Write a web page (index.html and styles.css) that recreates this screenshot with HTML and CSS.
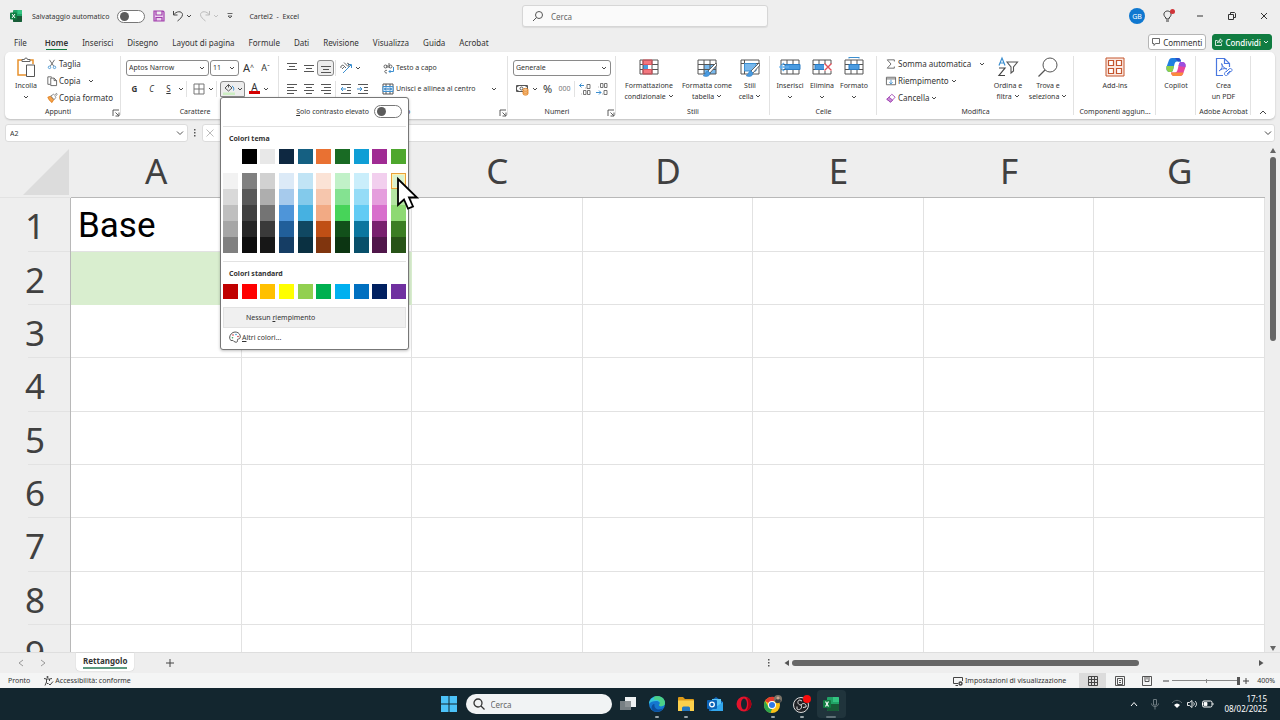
FILE: index.html
```html
<!DOCTYPE html>
<html lang="it">
<head>
    <meta charset="UTF-8">
    <meta name="viewport" content="width=device-width, initial-scale=1.0">
    <title>Cartel2 - Excel</title>
    <link rel="stylesheet" href="styles.css">
</head>
<body>
    <svg class="sprite" aria-hidden="true">
        <symbol id="chev" viewBox="0 0 6 6"><path d="M1 2l2 2 2-2" fill="none" stroke="currentColor" stroke-width=".9"/></symbol>
        <symbol id="launch" viewBox="0 0 8 8"><path d="M1 7V1h6M3.500 3.500L6.500 6.500M7 3.500V7H3.500" fill="none" stroke="currentColor" stroke-width=".8"/></symbol>
        <symbol id="table" viewBox="0 0 20 20"><path d="M1 3h18v14H1zM1 7.500h18M1 12.500h18M7 3v14M13 3v14" fill="none" stroke="#555"/></symbol>
        <symbol id="brush" viewBox="0 0 20 20"><path d="M19 6L11 14l1.500 2.500L20 8z" fill="#fff" stroke="#555" stroke-width=".9"/><path d="M11 14c-3 0-2 4-5 4.500 2 1.500 7 1.500 7-2.500z" fill="#4a9be0" stroke="#2b7cc4" stroke-width=".6"/></symbol>
    </svg>

    <header class="titlebar">
        <div class="title-left">
            <svg class="i12" viewBox="0 0 12 12"><rect x="3" width="9" height="12" rx="1" fill="#21a366"/><path d="M7.500 0H11a1 1 0 0 1 1 1v3H7.500z" fill="#33c481"/><path d="M3 6h9v5a1 1 0 0 1-1 1H4a1 1 0 0 1-1-1z" fill="#185c37"/><rect y="2.500" width="7" height="7" rx="1" fill="#107c41"/><path d="M2 4l3 4M5 4L2 8" stroke="#fff"/></svg>
            <label class="autosave" for="autosave">Salvataggio automatico</label>
            <input class="toggle" type="checkbox" id="autosave">
            <button class="quick save" aria-label="Salva"><svg class="i12" viewBox="0 0 12 12"><path d="M1 1h9l1 1v9H1zM3 1v4h6V1M3 11V7.500h6V11" fill="#ecd2ef" stroke="#a03cab" stroke-width="1.200"/></svg></button>
            <button class="quick" aria-label="Annulla"><svg class="i12" viewBox="0 0 12 12"><path d="M1.500 1v4h4M1.500 5C4 1 10 .500 10.500 4.500 10.500 7 8 9 5.500 11" fill="none" stroke="#444"/></svg><svg class="chev"><use href="#chev"/></svg></button>
            <button class="quick off" aria-label="Ripeti"><svg class="i12" viewBox="0 0 12 12"><path d="M10.500 1v4h-4M10.500 5C8 1 2 .500 1.500 4.500 1.500 7 4 9 6.500 11" fill="none" stroke="currentColor"/></svg><svg class="chev"><use href="#chev"/></svg></button>
            <button class="quick" aria-label="Personalizza"><svg class="chev" viewBox="0 0 6 6"><path d="M.500 .500h5M1 3l2 2 2-2z" fill="none" stroke="#444" stroke-width=".8"/></svg></button>
            <span class="doc-title">Cartel2 &nbsp;-&nbsp; Excel</span>
        </div>
        <label class="search">
            <svg class="i12" viewBox="0 0 12 12"><path d="M1 11l3.500-3.500" stroke="#555"/><circle cx="7" cy="5" r="3.500" fill="none" stroke="#555"/></svg>
            <input type="text" placeholder="Cerca" aria-label="Cerca">
        </label>
        <div class="title-right">
            <button class="avatar">GB</button>
            <button class="win" aria-label="Suggerimenti"><svg class="i14" viewBox="0 0 14 14"><path d="M5 10V9C1 5.500 3.500 2 6.500 2S12 5.500 8 9v1zM5 12h3" fill="none" stroke="#333"/><circle cx="11.500" cy="2.500" r="2.500" fill="#d13438"/></svg></button>
            <button class="win" aria-label="Riduci"><svg class="i8" viewBox="0 0 8 8"><path d="M1 4h6" stroke="#333"/></svg></button>
            <button class="win" aria-label="Ripristina"><svg class="i8" viewBox="0 0 8 8"><path d="M.500 2.500h5v5h-5zM2.500 2V.500h4l1 1V5.500H6" fill="none" stroke="#333"/></svg></button>
            <button class="win" aria-label="Chiudi"><svg class="i8" viewBox="0 0 8 8"><path d="M1 1l6 6M7 1L1 7" stroke="#333"/></svg></button>
        </div>
    </header>

    <nav class="tabs">
        <a href="#" class="file">File</a>
        <a href="#" class="active">Home</a>
        <a href="#">Inserisci</a>
        <a href="#">Disegno</a>
        <a href="#">Layout di pagina</a>
        <a href="#">Formule</a>
        <a href="#">Dati</a>
        <a href="#">Revisione</a>
        <a href="#">Visualizza</a>
        <a href="#">Guida</a>
        <a href="#">Acrobat</a>
        <div class="tab-actions">
            <button class="comments"><svg class="i8" viewBox="0 0 8 8"><path d="M.500.500h7v5h-4l-1.500 2v-2H.500z" fill="none" stroke="#444" stroke-width=".8"/></svg>Commenti</button>
            <button class="share"><svg class="i8" viewBox="0 0 8 8"><path d="M2.500 2.500h-2v5h6V5.500M2.500 5C2.500 3 4 2.500 5 2.500V.800l2.500 2.200L5 5V3.700C4 3.700 3 4 2.500 5z" fill="none" stroke="#fff" stroke-width=".8"/></svg>Condividi<svg class="chev"><use href="#chev"/></svg></button>
        </div>
    </nav>

    <section class="ribbon">
        <div class="group clipboard">
            <div class="tools">
                <button class="big"><svg class="i20" viewBox="0 0 20 20"><path d="M6 3H2v15h8M14 3h3v4" fill="none" stroke="#e8912d" stroke-width="1.500"/><path d="M6 4.500V2.500h2.500a1.500 1.500 0 0 1 3 0H14v2z" fill="#fff" stroke="#666"/><path d="M10.500 8h8v11.500h-8z" fill="#fff" stroke="#555"/></svg><span>Incolla</span><svg class="chev"><use href="#chev"/></svg></button>
                <div class="list">
                    <button><svg class="i10" viewBox="0 0 12 12"><path d="M3 1l5 7.500M9 1L4 8.500" stroke="#555"/><circle cx="3" cy="10" r="1.500" fill="none" stroke="#3c8fd0"/><circle cx="9" cy="10" r="1.500" fill="none" stroke="#3c8fd0"/></svg>Taglia</button>
                    <button><svg class="i10" viewBox="0 0 12 12"><path d="M4 10H1V1h4l1 1M4.500 2.500h4l3 3v6h-7zM8.500 2.500v3h3" fill="none" stroke="#555"/></svg>Copia<svg class="chev far"><use href="#chev"/></svg></button>
                    <button><svg class="i10" viewBox="0 0 12 12"><path d="M1 5l3-1 4 4-2 3.500C4 10 2 8 1 5z" fill="#f3a24b" stroke="#e07b16"/><path d="M4.500 3.500L8 1.500l1 1L11.500.500 12 2 10 4l.500 1.500L8.500 8z" fill="#fff" stroke="#555" stroke-width=".8"/></svg>Copia formato</button>
                </div>
            </div>
            <footer class="with-launch">Appunti<button class="launch" aria-label="Appunti"><svg class="i8"><use href="#launch"/></svg></button></footer>
        </div>

        <div class="group font">
            <div class="rows">
                <div class="row">
                    <span class="combo name"><select aria-label="Tipo di carattere"><option>Aptos Narrow</option></select><svg class="chev"><use href="#chev"/></svg></span>
                    <span class="combo size"><select aria-label="Dimensione"><option>11</option></select><svg class="chev"><use href="#chev"/></svg></span>
                    <button class="tool grow" aria-label="Aumenta dimensione">A<sup>^</sup></button>
                    <button class="tool shrink" aria-label="Riduci dimensione">A<sup>ˇ</sup></button>
                </div>
                <div class="row">
                    <button class="tool bold">G</button>
                    <button class="tool italic">C</button>
                    <button class="tool underline">S</button>
                    <button class="drop" aria-label="Sottolineato"><svg class="chev"><use href="#chev"/></svg></button>
                    <i class="sep"></i>
                    <button class="tool" aria-label="Bordi"><svg class="i12" viewBox="0 0 12 12"><path d="M1 1h10v10H1zM6 1v10M1 6h10" fill="none" stroke="#777"/></svg></button>
                    <button class="drop" aria-label="Opzioni bordi"><svg class="chev"><use href="#chev"/></svg></button>
                    <i class="sep"></i>
                    <div class="fill">
                        <button class="fill-button" aria-label="Colore riempimento"><svg class="i12" viewBox="0 0 12 12"><path d="M2 5l3.500-3.500L9 5 5.500 8zM5.500 1.500v3" fill="none" stroke="#555"/><path d="M9 3c2 1 2 3 1.500 4.500" fill="none" stroke="#3c8fd0"/><path d="M0 9.500h12V12H0z" fill="#cdeec3"/></svg><svg class="chev"><use href="#chev"/></svg></button>
                        <div class="palette">
                            <div class="contrast">
                                <label for="contrast"><u>S</u>olo contrasto elevato</label>
                                <input class="toggle" type="checkbox" id="contrast">
                            </div>
                            <h3>Colori tema</h3>
                            <div class="swatches" id="themeColors"></div>
                            <div class="swatches shades" id="themeShades"></div>
                            <h3 class="standard">Colori standard</h3>
                            <div class="swatches" id="standardColors"></div>
                            <button class="no-fill">Nessun <u>r</u>iempimento</button>
                            <button class="more"><svg class="i12" viewBox="0 0 12 12"><path d="M6 1c6 0 6.500 7 3.500 7-1.500 0-1 1-1 2S7.500 11.500 6 11 4.500 9 3 9.500.500 8 .700 6 3 1 6 1z" fill="#fff" stroke="#444" stroke-width=".9"/><circle cx="4" cy="4" r=".8" fill="#d13438"/><circle cx="7" cy="3.500" r=".8" fill="#3c8fd0"/><circle cx="9" cy="5.500" r=".8" fill="#d13438"/><circle cx="3.500" cy="6.800" r=".8" fill="#33a060"/></svg><span><u>A</u>ltri colori...</span></button>
                            <svg class="pointer" viewBox="0 0 23 34"><path d="M2 2v26l6-5.500 4 9 5-2-4-9h8z" fill="#fff" stroke="#000" stroke-width="1.800"/></svg>
                        </div>
                    </div>
                    <button class="tool color">A</button>
                    <button class="drop" aria-label="Colore carattere"><svg class="chev"><use href="#chev"/></svg></button>
                </div>
            </div>
            <footer class="with-launch">Carattere</footer>
        </div>

        <div class="group align">
            <div class="tools">
                <div class="rows align-icons">
                    <div class="row">
                        <button class="tool" aria-label="In alto"><svg class="i12" viewBox="0 0 12 12"><path d="M1 1.500h10M3 4.500h6M1 7.500h10" stroke="#555"/></svg></button>
                        <button class="tool" aria-label="Al centro"><svg class="i12" viewBox="0 0 12 12"><path d="M1 3.500h10M3 6.500h6M1 9.500h10" stroke="#555"/></svg></button>
                        <button class="tool on" aria-label="In basso"><svg class="i12" viewBox="0 0 12 12"><path d="M1 4.500h10M3 7.500h6M1 10.500h10" stroke="#555"/></svg></button>
                        <i class="sep"></i>
                        <button class="tool" aria-label="Orientamento"><svg class="i12" viewBox="0 0 12 12"><path d="M3 11l8-8M8 2.500h3.500V6" fill="none" stroke="#3c8fd0"/><path d="M1 6c-1-2 2-4 3-2l2 2M4 5L2 7M4 .500l4 4c2-1 1-4-1-3" fill="none" stroke="#555" stroke-width=".9"/></svg></button>
                        <button class="drop" aria-label="Opzioni orientamento"><svg class="chev"><use href="#chev"/></svg></button>
                    </div>
                    <div class="row">
                        <button class="tool" aria-label="Sinistra"><svg class="i12" viewBox="0 0 12 12"><path d="M1 1.500h10M1 4.500h7M1 7.500h10M1 10.500h7" stroke="#555"/></svg></button>
                        <button class="tool" aria-label="Centro"><svg class="i12" viewBox="0 0 12 12"><path d="M1 1.500h10M3 4.500h6M1 7.500h10M3 10.500h6" stroke="#555"/></svg></button>
                        <button class="tool" aria-label="Destra"><svg class="i12" viewBox="0 0 12 12"><path d="M1 1.500h10M4 4.500h7M1 7.500h10M4 10.500h7" stroke="#555"/></svg></button>
                        <i class="sep"></i>
                        <button class="tool" aria-label="Riduci rientro"><svg class="i12" viewBox="0 0 12 12"><path d="M1 1.500h10M7 4.500h4M7 7.500h4M1 10.500h10" stroke="#555"/><path d="M6 6H1M3 4L1 6l2 2" fill="none" stroke="#3c8fd0"/></svg></button>
                        <button class="tool" aria-label="Aumenta rientro"><svg class="i12" viewBox="0 0 12 12"><path d="M1 1.500h10M7 4.500h4M7 7.500h4M1 10.500h10" stroke="#555"/><path d="M0 6h5M3 4l2 2-2 2" fill="none" stroke="#3c8fd0"/></svg></button>
                    </div>
                </div>
                <div class="rows wrap-icons">
                    <div class="row"><button class="text"><svg class="i12" viewBox="0 0 12 12"><path d="M5 3v3M5 4.500a1.500 1.500 0 1 0-3 0 1.500 1.500 0 1 0 3 0M7 1v5M10 4.500a1.500 1.500 0 1 0-3 0 1.500 1.500 0 1 0 3 0M5 8.500c-3-1-3 3 0 2.500" fill="none" stroke="#555" stroke-width=".9"/><path d="M11.500 5v4.500H7M8.500 8L7 9.500 8.500 11" fill="none" stroke="#3c8fd0"/></svg>Testo a capo</button></div>
                    <div class="row"><button class="text"><svg class="i12" viewBox="0 0 12 12"><path d="M1 1h10v10H1zM4 1v10M8 1v10" fill="none" stroke="#555"/><path d="M1 3.500h10v5H1z" fill="#dceefb" stroke="#3c8fd0"/><path d="M2.500 6h7M4 4.500L2.500 6 4 7.500M8 4.500L9.500 6 8 7.500" fill="none" stroke="#1f6fb5"/></svg>Unisci e allinea al centro<svg class="chev far"><use href="#chev"/></svg></button></div>
                </div>
            </div>
            <footer class="with-launch">Allineamento<button class="launch" aria-label="Allineamento"><svg class="i8"><use href="#launch"/></svg></button></footer>
        </div>

        <div class="group number">
            <div class="rows">
                <div class="row"><span class="combo format"><select aria-label="Formato numero"><option>Generale</option></select><svg class="chev"><use href="#chev"/></svg></span></div>
                <div class="row">
                    <button class="tool" aria-label="Valuta"><svg class="i12" viewBox="0 0 12 12"><path d="M.500 2.500h11v6H.500zM3 2.500L1 4M9 2.500L11 4M1 7l2 1.500" fill="none" stroke="#555"/><circle cx="5.500" cy="5.500" r="1.500" fill="none" stroke="#555"/><path d="M7 6.500c0-1.500 5-1.500 5 0V11c0 1.500-5 1.500-5 0z" fill="#f6c28b" stroke="#e07b16" stroke-width=".8"/><path d="M7 7.500c1 1 4 1 5 0M7 9.500c1 1 4 1 5 0" fill="none" stroke="#e07b16" stroke-width=".7"/></svg></button>
                    <button class="drop" aria-label="Opzioni valuta"><svg class="chev"><use href="#chev"/></svg></button>
                    <button class="tool percent">%</button>
                    <button class="tool zeros">000</button>
                    <i class="sep"></i>
                    <button class="tool" aria-label="Aumenta decimali"><svg class="i12" viewBox="0 0 12 12"><path d="M5 2.500H.500M2.500.500l-2 2 2 2" fill="none" stroke="#3c8fd0"/><path d="M8 1.500h3v4H8zM4.500 7.500h2.500v4H4.500zM8.500 7.500H11v4H8.500zM6.500 5h.500M2.500 11h.500" fill="none" stroke="#666" stroke-width=".9"/></svg></button>
                    <button class="tool" aria-label="Riduci decimali"><svg class="i12" viewBox="0 0 12 12"><path d="M0 9.500h5M3 7.500l2 2-2 2" fill="none" stroke="#3c8fd0"/><path d="M4.500.500H7v4H4.500zM8.500.500H11v4H8.500zM8 7.500h3v4H8zM2.500 4h.500M6.500 11h.500" fill="none" stroke="#666" stroke-width=".9"/></svg></button>
                </div>
            </div>
            <footer class="with-launch">Numeri<button class="launch" aria-label="Numeri"><svg class="i8"><use href="#launch"/></svg></button></footer>
        </div>

        <div class="group styles">
            <div class="tools">
                <button class="big wide"><svg class="i20" viewBox="0 0 20 20"><path d="M4 3h9v4.500H4zM4 12.500h9V17H4z" fill="#f4777f"/><path d="M4 7.500h5v5H4z" fill="#4a9be0"/><path d="M1 3h18v14H1zM1 7.500h18M1 12.500h18M4 3v14M13 3v14" fill="none" stroke="#555"/><path d="M4 3h9v4.500H4zM4 12.500h9V17H4z" fill="none" stroke="#e0525c"/></svg><span>Formattazione<br>condizionale <svg class="chev"><use href="#chev"/></svg></span></button>
                <button class="big wide"><svg class="i20" viewBox="0 0 20 20"><path d="M7 7.500h12V17H7z" fill="#79b8ec"/><use href="#table"/><use href="#brush"/></svg><span>Formatta come<br>tabella <svg class="chev"><use href="#chev"/></svg></span></button>
                <button class="big slim"><svg class="i20" viewBox="0 0 20 20"><path d="M1 3h18v14H1zM1 6.500h18M4.500 3v14" fill="none" stroke="#555"/><path d="M4.500 6.500H16V14H4.500z" fill="#79b8ec" stroke="#3c8fd0"/><use href="#brush"/></svg><span>Stili<br>cella <svg class="chev"><use href="#chev"/></svg></span></button>
            </div>
            <footer>Stili</footer>
        </div>

        <div class="group cells">
            <div class="tools">
                <button class="big"><svg class="i20" viewBox="0 0 20 20"><use href="#table"/><path d="M5 7.500h15v5H5z" fill="#4a9be0" stroke="#2b7cc4"/><path d="M9 10H0M4 6l-4 4 4 4" fill="none" stroke="#64aee9" stroke-width="1.500"/></svg><span>Inserisci</span><svg class="chev"><use href="#chev"/></svg></button>
                <button class="big"><svg class="i20" viewBox="0 0 20 20"><use href="#table"/><path d="M3 7.500h10v5H3z" fill="#4a9be0" stroke="#2b7cc4"/><path d="M12 7h8v7h-8z" fill="#fff"/><path d="M12.500 6.500l7 7M19.500 6.500l-7 7" stroke="#e0525c" stroke-width="1.400"/></svg><span>Elimina</span><svg class="chev"><use href="#chev"/></svg></button>
                <button class="big"><svg class="i20" viewBox="0 0 20 20"><use href="#table"/><path d="M5 7.500h10v5H5z" fill="#4a9be0" stroke="#2b7cc4"/><path d="M5 .500h10M5 0v1.500M15 0v1.500" stroke="#3c8fd0"/></svg><span>Formato</span><svg class="chev"><use href="#chev"/></svg></button>
            </div>
            <footer>Celle</footer>
        </div>

        <div class="group edit">
            <div class="tools">
                <div class="list">
                    <button><svg class="i10" viewBox="0 0 12 12"><path d="M10 3V1H1.500L6 6l-4.500 5H10V9" fill="none" stroke="#555"/></svg>Somma automatica<svg class="chev far"><use href="#chev"/></svg></button>
                    <button><svg class="i10" viewBox="0 0 12 12"><path d="M.500 1.500h11v9H.500zM.500 3.500h11" fill="none" stroke="#555"/><path d="M6 4.500v5M4 7.500l2 2 2-2" fill="none" stroke="#3c8fd0"/></svg>Riempimento<svg class="chev"><use href="#chev"/></svg></button>
                    <button><svg class="i10" viewBox="0 0 12 12"><path d="M7 1.500L11 5l-5.500 6L1 7.500z" fill="#fff" stroke="#9b3fb0"/><path d="M3.500 5L8 8.500 5.500 11 1 7.500z" fill="#c98ad6" stroke="#9b3fb0"/></svg>Cancella<svg class="chev"><use href="#chev"/></svg></button>
                </div>
                <button class="big"><svg class="i20" viewBox="0 0 20 20"><path d="M1 8.500L4 1l3 7.500M2 6h4" fill="none" stroke="#3c8fd0" stroke-width="1.200"/><path d="M1 11h6l-6 7.500h6" fill="none" stroke="#444" stroke-width="1.200"/><path d="M9 5h10.500l-4 5v4l-2.500 2v-6z" fill="none" stroke="#555" stroke-width="1.100"/></svg><span>Ordina e<br>filtra <svg class="chev"><use href="#chev"/></svg></span></button>
                <button class="big"><svg class="i20" viewBox="0 0 20 20"><circle cx="12" cy="8" r="7" fill="none" stroke="#555"/><path d="M7 13l-6.500 6.500" stroke="#555" stroke-width="1.200"/></svg><span>Trova e<br>seleziona <svg class="chev"><use href="#chev"/></svg></span></button>
            </div>
            <footer>Modifica</footer>
        </div>

        <div class="group addins">
            <div class="tools">
                <button class="big"><svg class="i20" viewBox="0 0 20 20"><path d="M1 1h18v18H1z" fill="#fbe9e2" stroke="#c4562f"/><path d="M3.500 3.500h5v5h-5zM11.500 3.500h5v5h-5zM3.500 11.500h5v5h-5zM11.500 11.500h5v5h-5z" fill="#fff" stroke="#c4562f" stroke-width="1.200"/></svg><span>Add-ins</span></button>
            </div>
            <footer>Componenti aggiun...</footer>
        </div>

        <div class="group copilot">
            <div class="tools">
                <button class="big"><svg class="i20" viewBox="0 0 20 20"><path d="M6 1h6c2 0 2.500 1.500 3 3.500H11c-1.500 0-2 1-2.500 2.500L7 13c-.500 1.500-1 2-2.500 2C1 15 0 13 .500 10L3 3c.500-1.300 1.500-2 3-2z" fill="#1f7fe0"/><path d="M.500 9h7.500L7 13c-.500 1.500-1 2-2.500 2C1 15 0 13 .500 9z" fill="#8fd14a"/><path d="M14 19H8c-2 0-2.500-1.500-3-3.500h4c1.500 0 2-1 2.500-2.500L13 7c.500-1.500 1-2 2.500-2C19 5 20 7 19.500 10L17 17c-.500 1.300-1.500 2-3 2z" fill="#e8459a"/><path d="M12.500 9L13 7c.500-1.500 1-2 2.500-2C19 5 20 7 19.500 10z" fill="#9a4fe0"/><path d="M14 19H8c-2 0-2.500-1.500-3-3.500h12.500C17 18 15.500 19 14 19z" fill="#fa8b3c"/><path d="M9 1h3c2 0 2.500 1.500 3 3.500h-3z" fill="#2a4fc8"/></svg><span>Copilot</span></button>
            </div>
            <footer></footer>
        </div>

        <div class="group acrobat">
            <div class="tools">
                <button class="big"><svg class="i20" viewBox="0 0 20 20"><path d="M9 18.500H2.500v-17h8l5 5V10M10.500 1.500v5h5" fill="none" stroke="#4a78e0" stroke-width="1.200"/><path d="M5 14c3-2 4-5 3-7s-1 3 5 5c-3-1-6 0-8 2z" fill="none" stroke="#4a78e0"/><path d="M12 15l3-3c2-1.500 4 .500 2.500 2.500M17 14l-3.500 4c-2 1.500-4-.500-2.500-2.500l2-2M13 17l3-3" fill="none" stroke="#4a78e0"/></svg><span>Crea<br>un PDF</span></button>
            </div>
            <footer>Adobe Acrobat</footer>
        </div>
        <button class="collapse" aria-label="Comprimi barra"><svg class="i8" viewBox="0 0 8 8"><path d="M1 6l3-3 3 3" fill="none" stroke="#444"/></svg></button>
    </section>

    <div class="formula-bar">
        <span class="combo name-box"><input type="text" value="A2" aria-label="Casella nome"><svg class="i8" viewBox="0 0 8 8"><path d="M1 2.500l3 3 3-3" fill="none" stroke="#555"/></svg></span>
        <svg class="dots" viewBox="0 0 4 8"><path d="M1 0h1.500v1.500H1zM1 3h1.500v1.500H1zM1 6h1.500v1.500H1z" fill="#555"/></svg>
        <div class="formula">
            <svg class="i8" viewBox="0 0 8 8"><path d="M.500.500l7 7M7.500.500l-7 7" stroke="#bbb"/></svg>
            <input type="text" aria-label="Barra della formula">
            <svg class="i8" viewBox="0 0 8 8"><path d="M1 2.500l3 3 3-3" fill="none" stroke="#444"/></svg>
        </div>
    </div>

    <main class="workspace">
        <div class="sheet">
            <table id="grid"></table>
        </div>
        <div class="vscroll">
            <svg class="i8" viewBox="0 0 8 8"><path d="M4 1l3 5H1z" fill="#666"/></svg>
            <div class="track"><div class="thumb"></div></div>
            <svg class="i8" viewBox="0 0 8 8"><path d="M1 2h6L4 7z" fill="#666"/></svg>
        </div>
    </main>

    <div class="sheet-tabs">
        <button class="nav" aria-label="Precedente"><svg class="i8" viewBox="0 0 8 8"><path d="M6 1L2 4l4 3" fill="none" stroke="#999"/></svg></button>
        <button class="nav" aria-label="Successivo"><svg class="i8" viewBox="0 0 8 8"><path d="M2 1l4 3-4 3" fill="none" stroke="#999"/></svg></button>
        <a href="#" class="sheet-tab"><span>Rettangolo</span></a>
        <button class="add" aria-label="Nuovo foglio"><svg class="i8" viewBox="0 0 8 8"><path d="M4 0v8M0 4h8" stroke="#444"/></svg></button>
        <div class="hscroll">
            <svg class="dots" viewBox="0 0 4 8"><path d="M1 0h1.500v1.500H1zM1 3h1.500v1.500H1zM1 6h1.500v1.500H1z" fill="#555"/></svg>
            <svg class="i8" viewBox="0 0 8 8"><path d="M6 1v6L1.500 4z" fill="#555"/></svg>
            <div class="track"><div class="thumb"></div></div>
            <svg class="i8" viewBox="0 0 8 8"><path d="M2 1v6l4.500-3z" fill="#555"/></svg>
        </div>
    </div>

    <div class="status">
        <span class="ready">Pronto</span>
        <a href="#"><svg class="i10" viewBox="0 0 10 10"><path d="M1 2.500l2.500.500h3L9 2.500M3.500 3v3L2 9.500M6.500 3v2M3.500 6.500L5 8" fill="none" stroke="#444"/><circle cx="4.500" cy="1" r="1" fill="#444"/><path d="M5.500 7.500L7 9l3-3.500" fill="none" stroke="#444"/></svg>Accessibilità: conforme</a>
        <div class="status-right">
            <a href="#"><svg class="i10" viewBox="0 0 10 10"><path d="M5 7.500H.500v-6h9V5M2.500 9.500H5" fill="none" stroke="#444"/><circle cx="7.500" cy="7.500" r="1.500" fill="none" stroke="#444" stroke-width="1.400"/></svg>Impostazioni di visualizzazione</a>
            <button class="view on" aria-label="Normale"><svg class="i10" viewBox="0 0 10 10"><path d="M.500.500h9v9h-9zM.500 3.500h9M.500 6.500h9M3.500.500v9M6.500.500v9" fill="none" stroke="#444"/></svg></button>
            <button class="view" aria-label="Layout di pagina"><svg class="i10" viewBox="0 0 10 10"><path d="M.500.500h9v9h-9zM2.500 2.500h5v6h-5zM4 4.500h2M4 6.500h2" fill="none" stroke="#444" stroke-width=".9"/></svg></button>
            <button class="view" aria-label="Interruzioni di pagina"><svg class="i10" viewBox="0 0 10 10"><path d="M.500.500h9v9h-9zM3 .500v5h4v-5M5 .500v3" fill="none" stroke="#444" stroke-width=".9"/></svg></button>
            <button class="zoom-step" aria-label="Riduci zoom"><svg class="i6" viewBox="0 0 6 6"><path d="M0 3h6" stroke="#444"/></svg></button>
            <input class="zoom" type="range" min="10" max="400" value="400" aria-label="Zoom">
            <button class="zoom-step" aria-label="Aumenta zoom"><svg class="i6" viewBox="0 0 6 6"><path d="M0 3h6M3 0v6" stroke="#444"/></svg></button>
            <span class="percent-text">400%</span>
        </div>
    </div>

    <footer class="taskbar">
        <div class="task-apps">
            <button aria-label="Start"><svg class="i16" viewBox="0 0 16 16"><path d="M0 0h7.500v7.500H0zM8.500 0H16v7.500H8.500zM0 8.500h7.500V16H0zM8.500 8.500H16V16H8.500z" fill="#4cc2f8"/></svg></button>
            <label class="task-search"><svg class="i12" viewBox="0 0 12 12"><circle cx="5" cy="5" r="4" fill="none" stroke="#333" stroke-width="1.300"/><path d="M8 8l3.500 3.500" stroke="#333" stroke-width="1.300"/></svg><input type="text" placeholder="Cerca" aria-label="Cerca in Windows"></label>
            <button aria-label="Visualizzazione attività"><svg class="i16" viewBox="0 0 16 16"><path d="M5 1h11v10H5z" fill="#eef1f2"/><path d="M0 5h11v9H0z" fill="#83898d" opacity=".9"/></svg></button>
            <button class="running" aria-label="Edge"><svg class="i16" viewBox="0 0 16 16"><circle cx="8" cy="8" r="8" fill="#1477cf"/><path d="M0 8C0-1 15-3 16 7c0 4-6 4-6 2 2-2 0-4-3-4-3 0-6 1-7 3z" fill="#35c6d8"/><path d="M8 0c6 0 8 4 8 7 0 4-6 4-6 2 3-3-1-6-4-5C4 2 5 0 8 0z" fill="#54d36c" opacity=".75"/><path d="M5.500 8c-1 5 4 7 9 4-3 5-11 5-12 0 0-2 1-4 3-4z" fill="#0c4f9e"/></svg></button>
            <button class="running" aria-label="Esplora file"><svg class="i16" viewBox="0 0 16 16"><path d="M0 2a1 1 0 0 1 1-1h4l2 2h8a1 1 0 0 1 1 1v3H0z" fill="#dd9a18"/><path d="M0 4.500h16V15H0z" fill="#fcd04c"/><path d="M4 15v-3a1.500 1.500 0 0 1 1.500-1.500h5A1.500 1.500 0 0 1 12 12v3z" fill="#2477c0"/></svg></button>
            <button aria-label="Outlook"><svg class="i16" viewBox="0 0 16 16"><path d="M2 6l7-5 7 5v9H2z" fill="#1068bd"/><path d="M5 3h9v7H5z" fill="#5cc4f5"/><path d="M3 15l13-9v9z" fill="#32a7ee"/><rect y="4" width="10" height="9" rx="1" fill="#0a63b8"/><circle cx="5" cy="8.500" r="2.300" fill="none" stroke="#fff" stroke-width="1.300"/></svg></button>
            <button aria-label="Opera"><svg class="i16" viewBox="0 0 16 16"><circle cx="8" cy="8" r="7.500" fill="#e3142d"/><path d="M10 1c7 1 7 13 0 14 3-3 3-11 0-14z" fill="#a70014"/><ellipse cx="8" cy="8" rx="3" ry="5.500" fill="#13262f"/></svg></button>
            <button class="running" aria-label="Chrome"><svg class="i18" viewBox="0 0 18 18"><circle cx="8" cy="10" r="8" fill="#fbc116"/><path d="M8 10L1 6C4 1 12 0 15 6H8z" fill="#e33b2e"/><path d="M1 6l4 7 3 1-1.500 4C0 17-1 10 1 6z" fill="#2da44e"/><circle cx="8" cy="10" r="4" fill="#fff"/><circle cx="8" cy="10" r="3" fill="#2f78e8"/><circle cx="14" cy="4" r="4" fill="#7c7468"/><path d="M11 6c1-3 5-3 6 0-2 3-5 3-6 0z" fill="#3b4148"/><circle cx="14" cy="3" r="1.500" fill="#c9a68d"/></svg></button>
            <button class="running" aria-label="OBS"><svg class="i18" viewBox="0 0 18 18"><circle cx="8" cy="10" r="7.500" fill="#202226" stroke="#ddd"/><path d="M8 10c-4 0-4-5-1-5M8 10c2 3-2 6-4 4M8 10c2-3 6-1 5 2M7 5l2 1M4 14V11.500M13 12l-3 .500" fill="none" stroke="#ddd"/><circle cx="14" cy="4" r="4" fill="#f80d0d"/></svg></button>
            <button class="running current" aria-label="Excel"><svg class="i16" viewBox="0 0 16 16"><rect x="4" y="1" width="12" height="14" rx="1" fill="#21a366"/><path d="M10 1h5a1 1 0 0 1 1 1v4h-6z" fill="#33c481"/><path d="M4 8h12v6a1 1 0 0 1-1 1H5a1 1 0 0 1-1-1z" fill="#185c37"/><rect y="4" width="8" height="8" rx="1" fill="#107c41"/><path d="M2.500 5.500l3 5M5.500 5.500l-3 5" stroke="#fff" stroke-width="1.200"/></svg></button>
        </div>
        <div class="tray">
            <svg class="i8" viewBox="0 0 8 8"><path d="M1 6l3-3.500L7 6" fill="none" stroke="#fff"/></svg>
            <svg class="i12 mic" viewBox="0 0 12 12"><path d="M4.500 1.500h3V7h-3zM2.500 5.500c0 4 7 4 7 0M6 8.500v3" fill="none" stroke="#6d7a80"/></svg>
            <svg class="i10" viewBox="0 0 10 10"><path d="M0 4c3-3.500 7-3.500 10 0" fill="none" stroke="#5d6a70"/><path d="M2 6c2-2 4-2 6 0L5 9z" fill="#fff"/></svg>
            <svg class="i10" viewBox="0 0 10 10"><path d="M.500 3.500H2.500L5 1.500v7L2.500 6.500h-2zM6.500 3.500c1 1 1 2 0 3M8 2c2 2 2 4 0 6" fill="none" stroke="#fff" stroke-width=".9"/></svg>
            <svg class="i12" viewBox="0 0 12 12"><rect x=".5" y="3" width="9.500" height="6" rx="1.500" fill="none" stroke="#fff"/><path d="M2 4.500h3v3H2zM11 5v2" fill="#fff" stroke="#fff" stroke-width=".8"/></svg>
            <div class="clock">17:15<br>08/02/2025</div>
        </div>
    </footer>

    <script src="script.js"></script>
</body>
</html>
```

FILE: styles.css
```css
:root {
    --chrome: #eeeeee;
    --line: #e2e2e2;
    --text: #333333;
    --green: #107c41;
    --taskbar: #13262f;
}

* {
    margin: 0;
    padding: 0;
    box-sizing: border-box;
}

body {
    height: 100vh;
    display: flex;
    flex-direction: column;
    overflow: hidden;
    background: var(--chrome);
    color: var(--text);
    font-family: "Noto Sans", "Open Sans", sans-serif;
    font-size: 8px;
    line-height: 11px;
}

button, input, select {
    font: inherit;
    color: inherit;
    border: none;
    background: none;
    outline: none;
}

a {
    color: inherit;
    text-decoration: none;
}

svg {
    display: block;
    flex: none;
    overflow: visible;
}

.sprite {
    position: absolute;
    width: 0;
    height: 0;
}

.i6, .chev { width: 6px; height: 6px; }
.i8 { width: 8px; height: 8px; }
.i10 { width: 10px; height: 10px; }
.i12 { width: 12px; height: 12px; }
.i14 { width: 14px; height: 14px; }
.i16 { width: 16px; height: 16px; }
.i18 { width: 18px; height: 18px; }
.i20 { width: 20px; height: 20px; }
.dots { width: 4px; height: 8px; }

.toggle {
    appearance: none;
    width: 28px;
    height: 13px;
    padding: 2px;
    border: 1px solid #777;
    border-radius: 7px;
    background: #fff;
}

.toggle::before {
    content: "";
    display: block;
    width: 9px;
    height: 9px;
    margin-top: -1px;
    border-radius: 50%;
    background: #5c5c5c;
}

/* Title bar */
.titlebar {
    display: grid;
    grid-template-columns: 1fr 246px 1fr;
    align-items: center;
    height: 32px;
    padding-left: 10px;
    flex: none;
}

.title-left, .title-right {
    display: flex;
    align-items: center;
}

.autosave {
    margin: 0 8px 0 10px;
    font-size: 7px;
}

.quick {
    display: flex;
    align-items: center;
    gap: 2px;
    margin-right: 7px;
}

.quick.off {
    color: #bbb;
    margin-right: 8px;
}

.save {
    margin: 0 7px 0 8px;
}

.doc-title {
    margin-left: 9px;
    font-size: 7px;
}

.search {
    display: flex;
    align-items: center;
    gap: 7px;
    height: 22px;
    padding: 0 9px;
    border: 1px solid #d6d6d6;
    border-radius: 3px;
    background: #fafafa;
    box-shadow: 0 1px 1px rgba(0,0,0,0.08);
}

.search input {
    flex: 1;
}

::placeholder {
    color: #666;
    opacity: 1;
}

.title-right {
    justify-content: flex-end;
}

.avatar {
    width: 16px;
    height: 16px;
    margin-right: 7px;
    border-radius: 50%;
    background: #0f78d0;
    color: #fff;
    font-size: 7px;
}

.win {
    display: flex;
    justify-content: center;
    width: 32px;
}

/* Tabs */
.tabs {
    display: flex;
    align-items: center;
    gap: 14px;
    height: 20px;
    padding: 0 8px 0 14px;
    flex: none;
}

.tabs .file {
    margin-right: 4px;
}

.tabs .active {
    font-weight: 600;
    box-shadow: 0 2px 0 -1px var(--green);
    padding: 1px 0;
}

.tab-actions {
    display: flex;
    gap: 6px;
    margin-left: auto;
}

.tab-actions button {
    display: flex;
    align-items: center;
    justify-content: center;
    gap: 3px;
    height: 16px;
    padding: 0 3px;
    border: 1px solid #b5b5b5;
    border-radius: 3px;
    background: #fff;
}

.tab-actions .share {
    gap: 2px;
    padding: 0 2px;
    border-color: var(--green);
    background: var(--green);
    color: #fff;
    font-weight: 500;
}

/* Ribbon */
.ribbon {
    display: flex;
    height: 67px;
    margin: 0 5px;
    flex: none;
    border-radius: 5px;
    background: #fff;
    box-shadow: 0 1px 2px rgba(0,0,0,0.2);
}

.group {
    position: relative;
    display: flex;
    flex-direction: column;
    justify-content: space-between;
    flex: none;
}

.group::after {
    content: "";
    position: absolute;
    top: 4px;
    bottom: 4px;
    right: 0;
    border-right: 1px solid var(--line);
}

.group footer {
    display: flex;
    justify-content: center;
    height: 13px;
    font-size: 7px;
    white-space: nowrap;
}

.group .with-launch {
    padding-right: 10px;
}

.launch {
    position: absolute;
    right: 1px;
    bottom: 2px;
}

.clipboard { width: 116px; }
.font { width: 158px; }
.align { width: 229px; }
.number { width: 108px; }
.styles { width: 154px; }
.cells { width: 107px; }
.edit { width: 197px; }
.addins { width: 82px; }
.copilot { width: 40px; }
.acrobat { width: 55px; }

.tools {
    display: flex;
}

.font .rows, .number .rows {
    padding-left: 5px;
}

.align .tools, .styles .tools, .cells .tools {
    padding-left: 4px;
}

.edit .tools {
    padding-left: 9px;
}

.big {
    display: flex;
    flex-direction: column;
    align-items: center;
    min-width: 32px;
    padding-top: 5px;
    font-size: 7px;
    white-space: nowrap;
}

.big > span {
    margin-top: 3px;
}

.big > .chev {
    margin-top: 3px;
}

.big span .chev {
    display: inline-block;
}

.clipboard .big { width: 42px; }
.big.wide { width: 58px; }
.big.slim { width: 28px; min-width: 0; }
.edit .big { width: 40px; }
.addins .big, .copilot .big, .acrobat .big { width: 100%; }

.list {
    padding-top: 3px;
}

.list button {
    display: flex;
    align-items: center;
    gap: 2px;
    height: 17px;
    white-space: nowrap;
}

.edit .list {
    width: 102px;
}

.list .far {
    margin-left: 6px;
}

.rows {
    padding-top: 5px;
}

.row {
    display: flex;
    align-items: center;
    height: 21px;
}

.combo {
    display: flex;
    align-items: center;
    height: 16px;
    padding: 0 3px 0 2px;
    border: 1px solid #8a8a8a;
    border-radius: 3px;
    background: #fff;
    font-size: 7px;
}

.combo select, .combo input {
    appearance: none;
    flex: 1;
    min-width: 0;
}

.combo.name { width: 83px; margin-right: 1px; }
.combo.size { width: 29px; margin-right: 1px; }
.combo.format { width: 98px; }

.tool {
    display: flex;
    align-items: center;
    justify-content: center;
    width: 17px;
    height: 16px;
}

.tool.on {
    border: 1px solid #8a8a8a;
    border-radius: 3px;
    background: #ededed;
}

.drop {
    display: flex;
    justify-content: center;
    width: 7px;
}

.sep {
    width: 1px;
    height: 16px;
    margin: 0 1px;
    background: var(--line);
}

.font .sep {
    margin: 0 3px 0 2px;
}

.number .drop {
    width: 9px;
}

.grow { font-size: 11px; }
.shrink { font-size: 9px; }
.grow sup, .shrink sup { font-size: 7px; line-height: 7px; }
.bold { font-weight: 700; }
.italic { font-style: italic; }
.underline { text-decoration: underline; }
.percent { font-size: 11px; }
.zeros { font-size: 7px; color: #777; }

.color {
    height: 11px;
    font-size: 10px;
    border-bottom: 3px solid #d40000;
    width: 11px;
    margin: 0 2px 0 4px;
}

.align-icons {
    width: 93px;
}

.text {
    display: flex;
    align-items: center;
    gap: 2px;
    padding-left: 6px;
    font-size: 7px;
    white-space: nowrap;
}

.text .far {
    margin-left: 14px;
}

.collapse {
    margin: auto 8px 3px auto;
}

/* Fill colour menu */
.fill {
    position: relative;
}

.fill-button {
    display: flex;
    align-items: center;
    justify-content: center;
    gap: 2px;
    width: 25px;
    height: 16px;
    border: 1px solid #8a8a8a;
    border-radius: 3px 3px 0 0;
    background: #ededed;
}

.palette {
    position: absolute;
    z-index: 10;
    top: 16px;
    left: 0;
    width: 189px;
    padding: 0 2px 2px;
    border: 1px solid #777;
    border-radius: 3px;
    background: #fff;
    box-shadow: 0 1px 3px rgba(0,0,0,0.25);
    font-size: 7px;
}

.contrast {
    display: flex;
    align-items: center;
    justify-content: flex-end;
    gap: 5px;
    height: 29px;
    padding-right: 4px;
    border-bottom: 1px solid var(--line);
}

.palette h3 {
    padding: 6px 6px 5px;
    font-size: 7px;
    font-weight: 700;
}

.palette .standard {
    margin-top: 8px;
    border-top: 1px solid var(--line);
}

.swatches {
    display: grid;
    grid-template-columns: repeat(10, 15px);
    grid-auto-rows: 15px;
    justify-content: space-between;
}

.swatches.shades {
    grid-auto-rows: 16px;
    margin-top: 9px;
}

.swatches .hovered {
    border: 1px solid #e8a33a;
    box-shadow: inset 0 0 0 1px #fff2b0;
}

.no-fill {
    display: block;
    width: 100%;
    height: 21px;
    margin-top: 8px;
    padding-left: 22px;
    border: 1px solid var(--line);
    background: #f0f0f0;
    text-align: left;
}

.more {
    display: flex;
    align-items: center;
    gap: 1px;
    height: 19px;
    padding-left: 6px;
}

.pointer {
    position: absolute;
    top: 79px;
    left: 175px;
    width: 23px;
    height: 34px;
}

/* Formula bar */
.formula-bar {
    display: flex;
    align-items: center;
    gap: 5px;
    height: 18px;
    margin: 5px 5px 0;
    flex: none;
}

.combo.name-box {
    width: 183px;
    height: 18px;
    padding: 0 3px 0 4px;
    border-color: #dcdcdc;
}

.formula {
    flex: 1;
    display: flex;
    align-items: center;
    height: 18px;
    padding: 0 2px 0 3px;
    border: 1px solid #dcdcdc;
    border-radius: 3px;
    background: #fff;
}

.formula input {
    flex: 1;
}

/* Sheet */
.workspace {
    flex: 1;
    min-height: 0;
    display: flex;
}

.sheet {
    flex: 1;
    overflow: hidden;
}

.sheet table {
    width: 100%;
    table-layout: fixed;
    border-collapse: separate;
    border-spacing: 0;
    font-size: 35px;
    line-height: 40px;
}

.sheet th {
    padding-top: 2px;
    background: var(--chrome);
    color: #404040;
    font-weight: 400;
}

.sheet thead th {
    height: 56px;
    border-bottom: 1px solid #b8b8b8;
}

.sheet thead .corner {
    width: 71px;
    padding: 6px 1px 2px 23px;
    border-color: var(--line);
}

.sheet .corner svg {
    width: 46px;
    height: 46px;
}

/* the rule between row numbers stops short of the left edge */
.sheet tbody th {
    border-right: 1px solid #b8b8b8;
    background: linear-gradient(var(--line), var(--line)) right bottom / 42px 1px no-repeat, var(--chrome);
}

.sheet td {
    height: 53px;
    padding: 3px 0 0 7px;
    border-right: 1px solid var(--line);
    border-bottom: 1px solid var(--line);
    background: #fff;
    color: #000;
    font-family: Roboto, "Liberation Sans", sans-serif;
}

.sheet tr:nth-child(3n + 1) td {
    height: 54px;
}

.sheet .filled {
    background: #d9eecf;
    border-color: #d9eecf;
}

.vscroll {
    display: flex;
    flex-direction: column;
    align-items: center;
    gap: 2px;
    width: 15px;
    padding-top: 5px;
}

.vscroll .track {
    flex: 1;
}

.vscroll .thumb {
    width: 6px;
    height: 38%;
    border-radius: 3px;
    background: #666;
}

/* Sheet tabs */
.sheet-tabs {
    display: flex;
    align-items: center;
    height: 21px;
    flex: none;
    padding: 0 15px 0 10px;
    border-top: 1px solid #dedede;
}

.nav {
    display: flex;
    justify-content: center;
    width: 22px;
}

.sheet-tab {
    align-self: flex-start;
    height: 18px;
    margin-left: 22px;
    padding: 2px 7px;
    border-radius: 0 0 4px 4px;
    background: #fff;
    box-shadow: 0 0 1px rgba(0,0,0,0.3);
    font-weight: 700;
}

.sheet-tab span {
    display: block;
    height: 14px;
    border-bottom: 2px solid #5d9a80;
}

.add {
    margin-left: 32px;
}

.hscroll {
    display: flex;
    align-items: center;
    width: 498px;
    margin-left: auto;
}

.hscroll .dots {
    margin-right: 12px;
}

.hscroll .track {
    flex: 1;
    margin: 0 2px 0 1px;
}

.hscroll .thumb {
    width: 75%;
    height: 6px;
    border-radius: 3px;
    background: #666;
}

/* Status bar */
.status {
    display: flex;
    align-items: center;
    gap: 13px;
    height: 15px;
    flex: none;
    padding: 0 5px 0 8px;
    background: #f4f5f5;
    font-size: 7px;
}

.status a {
    display: flex;
    align-items: center;
    gap: 2px;
}

.status-right {
    display: flex;
    align-items: center;
    margin-left: auto;
}

.view {
    display: flex;
    align-items: center;
    justify-content: center;
    width: 27px;
    height: 15px;
}

.view.on {
    margin-left: 13px;
    background: #dcdcdc;
}

.zoom-step {
    margin-left: 3px;
}

.zoom {
    appearance: none;
    width: 68px;
    height: 8px;
    margin-left: 3px;
    background: linear-gradient(#888, #888) center / 1px 4px no-repeat, linear-gradient(#888, #888) center / 100% 1px no-repeat;
}

.zoom::-webkit-slider-thumb {
    appearance: none;
    width: 3px;
    height: 8px;
    background: #555;
}

.percent-text {
    margin-left: 8px;
}

/* Taskbar */
.taskbar {
    display: grid;
    grid-template-columns: 1fr auto 1fr;
    height: 32px;
    flex: none;
    background: var(--taskbar);
    color: #fff;
}

.task-apps {
    grid-column: 2;
    display: flex;
    align-items: center;
}

.task-apps button {
    position: relative;
    display: flex;
    align-items: center;
    justify-content: center;
    width: 29px;
    height: 28px;
    border-radius: 4px;
}

.task-apps .running::after {
    content: "";
    position: absolute;
    bottom: 0;
    width: 4px;
    height: 2px;
    border-radius: 1px;
    background: #9aa5aa;
}

.task-apps .current {
    background: #20343c;
}

.task-apps .current::after {
    width: 10px;
    background: #5f7077;
}

.task-search {
    display: flex;
    align-items: center;
    gap: 6px;
    width: 146px;
    height: 20px;
    margin: 0 2px;
    padding: 0 7px;
    border-radius: 10px;
    background: #f1f3f4;
}

.task-search input {
    flex: 1;
    min-width: 0;
}

.tray {
    display: flex;
    align-items: center;
    justify-content: flex-end;
    gap: 5px;
    padding-right: 13px;
}

.tray .mic {
    margin: 0 6px;
}

.clock {
    margin-left: 5px;
    line-height: 10px;
    text-align: right;
}
```

FILE: script.js
```javascript
const themeColors = ['#ffffff', '#000000', '#e8e8e8', '#0e2841', '#156082', '#e97132', '#196b24', '#0f9ed5', '#a02b93', '#4ea72e'];

const themeShades = [
    ['#f2f2f2', '#808080', '#d1d1d1', '#dceaf7', '#c1e4f5', '#fbe3d6', '#c1f1c8', '#caeefb', '#f2cfee', '#d9f2d0'],
    ['#d9d9d9', '#595959', '#aeaeae', '#a6caec', '#83caeb', '#f6c6ad', '#84e291', '#95dcf7', '#e59edd', '#b4e5a2'],
    ['#bfbfbf', '#404040', '#747474', '#4e95d9', '#46b1e1', '#f2aa84', '#47d459', '#61cbf4', '#d86ecc', '#8ed973'],
    ['#a6a6a6', '#262626', '#3a3a3a', '#215f9a', '#104862', '#c04f15', '#12501a', '#0b769f', '#78206e', '#3b7d23'],
    ['#808080', '#0d0d0d', '#171717', '#153d64', '#0a3041', '#80350e', '#0c3512', '#084f6a', '#50164a', '#275317']
];

const standardColors = ['#c00000', '#ff0000', '#ffc000', '#ffff00', '#92d050', '#00b050', '#00b0f0', '#0070c0', '#002060', '#7030a0'];

function addSwatches(id, colors) {
    const box = document.getElementById(id);
    colors.forEach(color => {
        const swatch = document.createElement('button');
        swatch.style.backgroundColor = color;
        swatch.setAttribute('aria-label', color);
        box.appendChild(swatch);
    });
    return box;
}

addSwatches('themeColors', themeColors);
addSwatches('standardColors', standardColors);
const shades = addSwatches('themeShades', themeShades.flat());
shades.children[9].classList.add('hovered');

// Griglia del foglio
const columns = ['A', 'B', 'C', 'D', 'E', 'F', 'G'];
const values = { A1: 'Base' };
const filled = ['A2', 'B2'];

let html = '<thead><tr><th class="corner"><svg viewBox="0 0 46 46"><path d="M46 0v46H0z" fill="#dcdcdc"/></svg></th>';
html += columns.map(c => `<th>${c}</th>`).join('') + '</tr></thead><tbody>';
for (let row = 1; row <= 9; row++) {
    html += `<tr><th>${row}</th>`;
    columns.forEach(c => {
        const ref = c + row;
        html += `<td${filled.includes(ref) ? ' class="filled"' : ''}>${values[ref] || ''}</td>`;
    });
    html += '</tr>';
}
document.getElementById('grid').innerHTML = html + '</tbody>';
```
